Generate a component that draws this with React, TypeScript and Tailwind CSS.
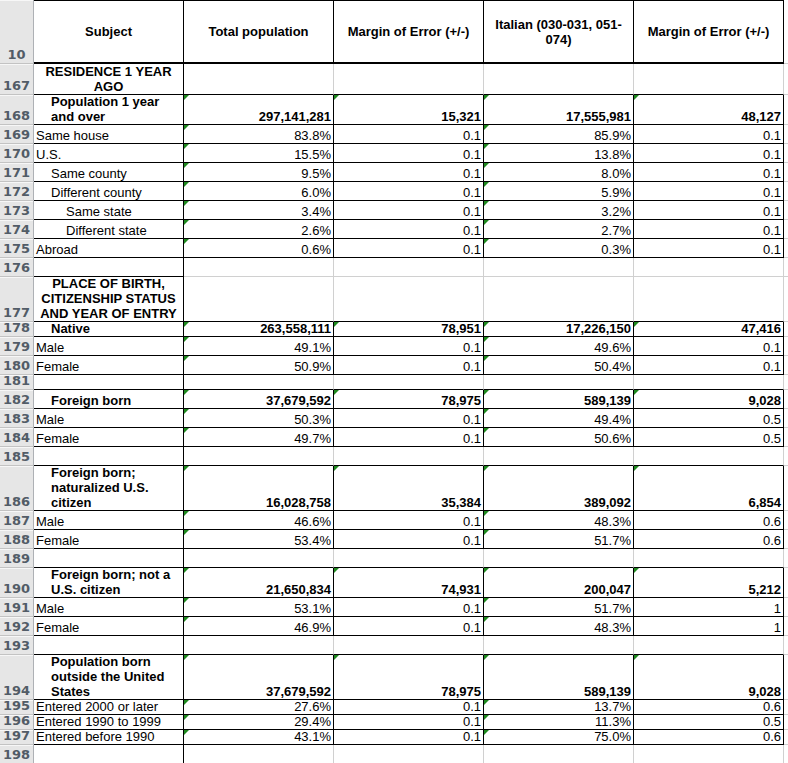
import React from "react";

type RowDef = {
  n: number;
  h: number;
  kind: "section" | "data" | "empty";
  label?: string;
  indent?: 0 | 1 | 2;
  bold?: boolean;
  vals?: string[];
  nextData?: boolean;
};

const rows: RowDef[] = [
  { n: 167, h: 31, kind: "section", label: "RESIDENCE 1 YEAR AGO", nextData: true },
  { n: 168, h: 30, kind: "data", label: "Population 1 year and over", indent: 1, bold: true, vals: ["297,141,281", "15,321", "17,555,981", "48,127"] },
  { n: 169, h: 19, kind: "data", label: "Same house", indent: 0, vals: ["83.8%", "0.1", "85.9%", "0.1"] },
  { n: 170, h: 19, kind: "data", label: "U.S.", indent: 0, vals: ["15.5%", "0.1", "13.8%", "0.1"] },
  { n: 171, h: 19, kind: "data", label: "Same county", indent: 1, vals: ["9.5%", "0.1", "8.0%", "0.1"] },
  { n: 172, h: 19, kind: "data", label: "Different county", indent: 1, vals: ["6.0%", "0.1", "5.9%", "0.1"] },
  { n: 173, h: 19, kind: "data", label: "Same state", indent: 2, vals: ["3.4%", "0.1", "3.2%", "0.1"] },
  { n: 174, h: 19, kind: "data", label: "Different state", indent: 2, vals: ["2.6%", "0.1", "2.7%", "0.1"] },
  { n: 175, h: 19, kind: "data", label: "Abroad", indent: 0, vals: ["0.6%", "0.1", "0.3%", "0.1"] },
  { n: 176, h: 19, kind: "empty" },
  { n: 177, h: 45, kind: "section", label: "PLACE OF BIRTH, CITIZENSHIP STATUS AND YEAR OF ENTRY", nextData: true },
  { n: 178, h: 15, kind: "data", label: "Native", indent: 1, bold: true, vals: ["263,558,111", "78,951", "17,226,150", "47,416"] },
  { n: 179, h: 19, kind: "data", label: "Male", indent: 0, vals: ["49.1%", "0.1", "49.6%", "0.1"] },
  { n: 180, h: 19, kind: "data", label: "Female", indent: 0, vals: ["50.9%", "0.1", "50.4%", "0.1"] },
  { n: 181, h: 15, kind: "empty", nextData: true },
  { n: 182, h: 19, kind: "data", label: "Foreign born", indent: 1, bold: true, vals: ["37,679,592", "78,975", "589,139", "9,028"] },
  { n: 183, h: 19, kind: "data", label: "Male", indent: 0, vals: ["50.3%", "0.1", "49.4%", "0.5"] },
  { n: 184, h: 19, kind: "data", label: "Female", indent: 0, vals: ["49.7%", "0.1", "50.6%", "0.5"] },
  { n: 185, h: 19, kind: "empty", nextData: true },
  { n: 186, h: 45, kind: "data", label: "Foreign born; naturalized U.S. citizen", indent: 1, bold: true, vals: ["16,028,758", "35,384", "389,092", "6,854"] },
  { n: 187, h: 19, kind: "data", label: "Male", indent: 0, vals: ["46.6%", "0.1", "48.3%", "0.6"] },
  { n: 188, h: 19, kind: "data", label: "Female", indent: 0, vals: ["53.4%", "0.1", "51.7%", "0.6"] },
  { n: 189, h: 19, kind: "empty", nextData: true },
  { n: 190, h: 30, kind: "data", label: "Foreign born; not a U.S. citizen", indent: 1, bold: true, vals: ["21,650,834", "74,931", "200,047", "5,212"] },
  { n: 191, h: 19, kind: "data", label: "Male", indent: 0, vals: ["53.1%", "0.1", "51.7%", "1"] },
  { n: 192, h: 19, kind: "data", label: "Female", indent: 0, vals: ["46.9%", "0.1", "48.3%", "1"] },
  { n: 193, h: 19, kind: "empty", nextData: true },
  { n: 194, h: 45, kind: "data", label: "Population born outside the United States", indent: 1, bold: true, vals: ["37,679,592", "78,975", "589,139", "9,028"] },
  { n: 195, h: 15, kind: "data", label: "Entered 2000 or later", indent: 0, vals: ["27.6%", "0.1", "13.7%", "0.6"] },
  { n: 196, h: 15, kind: "data", label: "Entered 1990 to 1999", indent: 0, vals: ["29.4%", "0.1", "11.3%", "0.5"] },
  { n: 197, h: 15, kind: "data", label: "Entered before 1990", indent: 0, vals: ["43.1%", "0.1", "75.0%", "0.6"] },
  { n: 198, h: 19, kind: "empty" },
];

function Tri() {
  return (
    <div className="absolute left-0 top-0 h-0 w-0 border-t-[5px] border-r-[5px] border-t-[#1f8a1f] border-r-transparent" />
  );
}

function RowHead({ n }: { n: number | string }) {
  return (
    <div className="flex h-full w-[34px] shrink-0 items-end justify-center border-r border-b border-r-[#aeb1b5] border-b-[#c3c3c3] bg-[#e6e6e6] shadow-[inset_0_1px_0_#f7f7f7] font-['DejaVu_Sans',sans-serif] text-[13px] font-bold leading-[15px] text-[#525c67]">
      <span className="pb-[1px]">{n}</span>
    </div>
  );
}

function HeaderRow() {
  const heads: React.ReactNode[] = [
    "Subject",
    "Total population",
    "Margin of Error (+/-)",
    <span key="it" className="whitespace-nowrap">
      Italian (030-031, 051-
      <br />
      074)
    </span>,
    "Margin of Error (+/-)",
  ];
  return (
    <div className="flex h-[64px]">
      <RowHead n={10} />
      {heads.map((t, i) => (
        <div
          key={i}
          className="flex h-full w-[150px] shrink-0 items-center justify-center border-t border-r border-b-2 border-black px-[3px] text-center font-bold"
        >
          {t}
        </div>
      ))}
      <div className="h-full flex-1 border-b border-[#d0d0d0]" />
    </div>
  );
}

function Row({ r }: { r: RowDef }) {
  const isData = r.kind === "data";
  const indentCls =
    r.indent === 2 ? "pl-[32px]" : r.indent === 1 ? "pl-[17px]" : "pl-[2px]";
  return (
    <div className="flex" style={{ height: r.h }}>
      <RowHead n={r.n} />
      {/* Subject column */}
      <div className="flex h-full w-[150px] shrink-0 items-end overflow-hidden border-r border-b border-black">
        {r.kind === "section" ? (
          <div className="w-full px-[3px] text-center font-bold">{r.label}</div>
        ) : r.kind === "data" ? (
          <div className={`w-full pr-[3px] ${indentCls} ${r.bold ? "font-bold" : ""}`}>
            {r.label}
          </div>
        ) : null}
      </div>
      {[0, 1, 2, 3].map((i) => {
        if (isData) {
          const tri = r.bold || i === 0 || i === 2;
          return (
            <div
              key={i}
              className="relative flex h-full w-[150px] shrink-0 items-end justify-end overflow-hidden border-r border-b border-black pr-[2px]"
            >
              {tri && <Tri />}
              <span className={r.bold ? "font-bold" : ""}>{r.vals![i]}</span>
            </div>
          );
        }
        return (
          <div
            key={i}
            className={`h-full w-[150px] shrink-0 border-r border-b border-r-[#d0d0d0] ${
              r.nextData ? "border-b-black" : "border-b-[#d0d0d0]"
            }`}
          />
        );
      })}
      <div className="h-full flex-1 border-b border-[#d0d0d0]" />
    </div>
  );
}

export default function App() {
  return (
    <div className="h-[763px] w-[788px] overflow-hidden bg-white font-['Liberation_Sans',Arial,sans-serif] text-[13px] leading-[15px] text-black">
      <HeaderRow />
      {rows.map((r) => (
        <Row key={r.n} r={r} />
      ))}
    </div>
  );
}
